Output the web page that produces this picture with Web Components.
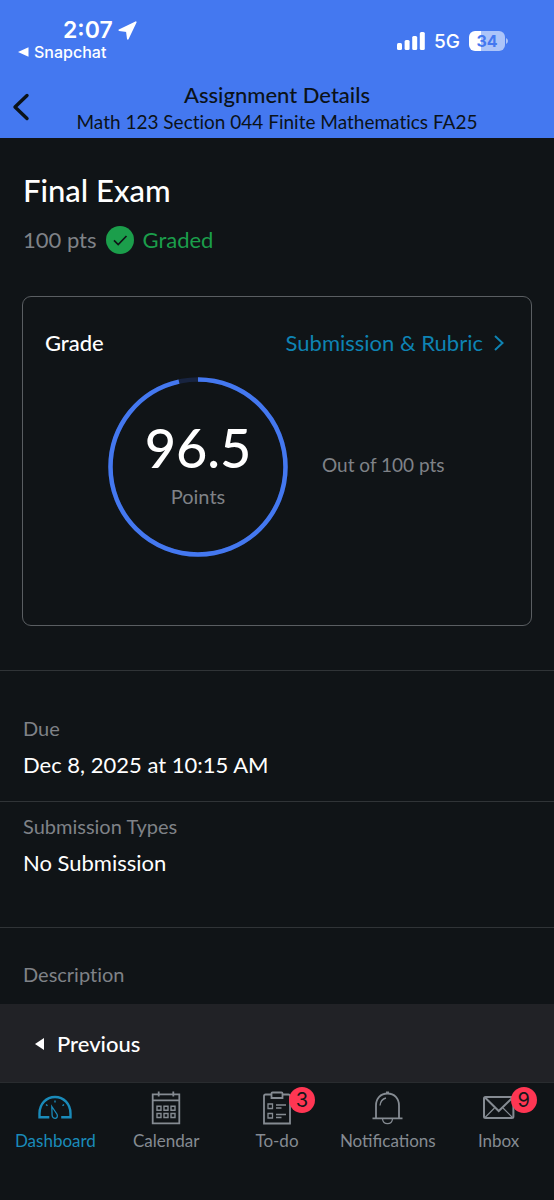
<!DOCTYPE html>
<html lang="en">
<head>
<meta charset="utf-8">
<meta name="viewport" content="width=device-width, initial-scale=1">
<title>Assignment Details</title>
<style>
  :root {
    --bg: #101417; --brand: #4478f0; --ink: #0b1218; --text: #ffffff;
    --muted: #7f8287; --line: #303437; --link: #0e83b3; --green: #1b9e4b; --badge: #ff3653;
  }
  body { margin: 0; background: var(--bg); color: var(--text); font-family: Lato, "Liberation Sans", sans-serif; font-variant-ligatures: no-common-ligatures; }
</style>
</head>
<body>
<assignment-page></assignment-page>
<script>
const define = (name, html, setup) => {
  const template = document.createElement('template');
  template.innerHTML = html;
  customElements.define(name, class extends HTMLElement {
    constructor() {
      super();
      this.attachShadow({ mode: 'open' }).append(template.content.cloneNode(true));
    }
    connectedCallback() { if (setup) setup(this, this.shadowRoot); }
  });
};

define('status-bar', `
  <style>
    :host { display: flex; justify-content: space-between; height: 80px; padding: 0 46px 0 18px; box-sizing: border-box; color: #fff; font-family: Inter, sans-serif; }
    .left { padding-top: 17px; }
    .time { display: flex; align-items: center; gap: 5px; padding-left: 45px; font-size: 23px; font-weight: 600; line-height: 27px; }
    a { display: flex; align-items: center; gap: 5px; color: inherit; text-decoration: none; font-size: 16px; font-weight: 500; line-height: 16px; }
    .right { display: flex; align-items: center; gap: 9px; height: 20px; padding-top: 31px; font-size: 19px; font-weight: 500; }
    svg { display: block; }
    .battery { display: flex; align-items: center; gap: 1px; }
    .cell { width: 36px; height: 20px; border-radius: 6px; background: linear-gradient(90deg, #fff 34%, #acc4f9 34%); color: var(--brand); font-size: 16px; font-weight: 700; line-height: 20px; text-align: center; }
  </style>
  <div class="left">
    <div class="time"><span>2:07</span>
      <svg width="19" height="19" viewBox="0 0 19 19" fill="#fff" stroke="#fff" stroke-width="1.600" stroke-linejoin="round"><path d="M17.800 1.200 9.800 17.800 8.800 10.200 1.200 9.200z"/></svg>
    </div>
    <a href="#snapchat"><svg width="11" height="10" viewBox="0 0 11 10" fill="#fff"><path d="M0 5 10.500.3v9.400z"/></svg><span>Snapchat</span></a>
  </div>
  <div class="right">
    <svg width="28" height="18" viewBox="0 0 28 18" fill="#fff"><rect y="11" width="5" height="7" rx="1.500"/><rect x="7.600" y="8" width="5" height="10" rx="1.500"/><rect x="15.200" y="4" width="5" height="14" rx="1.500"/><rect x="22.800" width="5" height="18" rx="1.500"/></svg>
    <span>5G</span>
    <div class="battery"><div class="cell">34</div><svg width="2" height="6" viewBox="0 0 2 6"><path d="M0 0Q2 1 2 3T0 6z" fill="#acc4f9"/></svg></div>
  </div>`);

define('nav-header', `
  <style>
    :host { display: grid; grid-template-columns: 44px 1fr 44px; height: 58px; color: var(--ink); }
    button { display: flex; align-items: center; padding: 0 0 4px 12px; border: 0; background: none; color: inherit; }
    .titles { text-align: center; white-space: nowrap; }
    h1 { margin: 0; font-size: 22px; font-weight: 500; line-height: 29px; }
    p { margin: 0; font-size: 19px; line-height: 25px; }
  </style>
  <button aria-label="Back"><svg width="18" height="28" viewBox="0 0 18 28" fill="none" stroke="currentColor" stroke-width="3.400" stroke-linecap="round" stroke-linejoin="round"><path d="M15 2.500 3 14l12 11.500"/></svg></button>
  <div class="titles"><h1><slot name="title"></slot></h1><p><slot name="course"></slot></p></div>`);

define('score-ring', `
  <style>
    :host { display: grid; width: 180px; height: 180px; }
    svg, .label { grid-area: 1 / 1; }
    .label { display: flex; flex-direction: column; align-items: center; padding-top: 37px; }
    b { font-size: 54px; font-weight: 500; line-height: 68px; }
    span { color: var(--muted); font-size: 20px; line-height: 28px; }
  </style>
  <svg width="180" height="180" viewBox="0 0 180 180" fill="none" stroke-width="4.500">
    <circle cx="90" cy="90" r="87.500" stroke="#182440"/>
    <circle cx="90" cy="90" r="87.500" stroke="var(--brand)" pathLength="100" stroke-dasharray="96.500 3.500" transform="rotate(-90 90 90)"/>
  </svg>
  <div class="label"><b><slot></slot></b><span>Points</span></div>`);

define('grade-card', `
  <style>
    :host { display: block; min-height: 330px; margin: 0 22px; padding: 32px 26px 0 22px; box-sizing: border-box; border: 1px solid #5a5e62; border-radius: 9px; }
    .head { display: flex; justify-content: space-between; font-size: 22px; line-height: 28px; }
    h3 { margin: 0; font-size: inherit; font-weight: 500; }
    a { display: flex; align-items: center; gap: 10px; color: var(--link); text-decoration: none; }
    .score { display: flex; align-items: center; gap: 34px; margin-top: 20px; padding-left: 63px; }
    .total { padding-bottom: 4px; color: var(--muted); font-size: 19px; line-height: 28px; }
  </style>
  <div class="head"><h3>Grade</h3><a href="#rubric">Submission &amp; Rubric<svg width="12" height="18" viewBox="0 0 12 18" fill="none" stroke="currentColor" stroke-width="2"><path d="m2 2 7.500 7L2 16"/></svg></a></div>
  <div class="score"><score-ring><slot name="score"></slot></score-ring><div class="total"><slot name="total"></slot></div></div>`);

define('detail-item', `
  <style>
    :host { display: block; padding: 0 23px; box-sizing: border-box; border-top: 1px solid var(--line); }
    h3 { margin: 0; color: var(--muted); font-size: 20px; font-weight: 400; line-height: 28px; }
    div { padding-top: 8px; font-size: 22px; line-height: 30px; }
  </style>
  <h3><slot name="label"></slot></h3><div><slot></slot></div>`);

define('pager-bar', `
  <style>
    :host { display: flex; align-items: center; height: 79px; padding: 2px 35px 0; box-sizing: border-box; background: #212226; border-bottom: 1px solid #292c2f; }
    button { display: flex; align-items: center; gap: 12px; padding: 0; border: 0; background: none; color: #fff; font: 500 22px/28px Lato, sans-serif; }
  </style>
  <button><svg width="10" height="12" viewBox="0 0 10 12" fill="currentColor"><path d="M0 6 9 0v12z"/></svg>Previous</button>`);

define('tab-item', `
  <style>
    :host { display: block; flex: 1 1 0; min-width: 0; color: #858b92; font-variant-ligatures: normal; }
    :host([current]) { color: #1a8bba; }
    a { display: flex; flex-direction: column; align-items: center; padding-top: 8px; color: inherit; text-decoration: none; font-size: 17px; line-height: 24px; }
    .icon { position: relative; display: flex; width: 36px; height: 36px; }
    .badge { position: absolute; top: -4px; left: 30px; width: 26px; height: 26px; border-radius: 50%; background: var(--badge); color: #15161a; font: 20px/26px Inter, sans-serif; text-align: center; }
    .badge:empty { display: none; }
    .text { padding-top: 2px; }
  </style>
  <a href="#"><span class="icon"><slot name="icon"></slot><span class="badge"></span></span><span class="text"><slot></slot></span></a>`,
  (host, root) => { root.querySelector('.badge').textContent = host.getAttribute('badge') || ''; });

define('tab-bar', `
  <style>
    :host { display: flex; min-height: 117px; }
    svg { width: 36px; height: 36px; fill: none; stroke: currentColor; stroke-width: 1.800; }
  </style>
  <tab-item current><svg slot="icon" viewBox="0 0 36 36"><path d="M12.300 26.300H2.500v-3.800C2.500 13 9.300 6 18 6s15.500 7 15.500 16.500v3.800h-9.300" stroke-width="2.400"/><path d="M14.800 15.500 20 23.200c2 5-4.500 5.600-4.900 1.100z" stroke-width="1.300"/><path d="M18 9.500v2M9 13.500l1.500 1.300M27 13.500l-1.500 1.300" stroke-width="1.400"/></svg>Dashboard</tab-item>
  <tab-item><svg slot="icon" viewBox="0 0 36 36"><path d="M4.700 3.400h26.600v29H4.700zM4.700 9.300h26.600M10.700.5v5M25.300.5v5"/><path d="M9 15.300h4v4H9zm7 0h4v4h-4zm7 0h4v4h-4zM9 22.500h4v4H9zm7 0h4v4h-4zm7 0h4v4h-4z" stroke-width="1.400"/></svg>Calendar</tab-item>
  <tab-item badge="3"><svg slot="icon" viewBox="0 0 36 36"><path d="M12 3.500H6.500Q5 3.500 5 5v27.500h26V5q0-1.500-1.500-1.500H24M13.500 1.500h9q1 0 1 1V7h-11V2.500q0-1 1-1z"/><path d="M9 13h4.500v4.500H9zm0 9.500h4.500V27H9zM17 14h10M17 17h5.500M17 23.500h10M17 26.500h5.500" stroke-width="1.300"/></svg>To-do</tab-item>
  <tab-item><svg slot="icon" viewBox="0 0 36 36"><path d="M2.500 27.300h30M6 27V14.500C6 7.500 10.500 2.500 17.500 2.500s11.500 5 11.500 12V27M16 1.500h3"/><path d="M10 14.500q.5-6 6-7.500M12.500 28q.5 4.700 5 4.700t5-4.700" stroke-width="1.300"/></svg>Notifications</tab-item>
  <tab-item badge="9"><svg slot="icon" viewBox="0 0 36 36"><rect x="3" y="5.900" width="29.400" height="21" rx="1.500" stroke-width="2"/><path d="m4 6.500 13.700 13.500 14-13.500" stroke-width="2"/><path d="m4 26.500 9.500-9.500M31.500 26.500 22 17" stroke-width="1.200"/></svg>Inbox</tab-item>`);

define('assignment-page', `
  <style>
    :host { display: flex; flex-direction: column; min-height: 100vh; }
    header { background: var(--brand); }
    main { flex: 1; }
    h2 { margin: 0; padding: 33px 23px 0; font-size: 31px; font-weight: 500; line-height: 38px; }
    .meta { display: flex; align-items: center; gap: 9px; padding: 17px 23px 0; margin-bottom: 42px; color: var(--muted); font-size: 22px; line-height: 28px; }
    .graded { display: flex; align-items: center; gap: 9px; color: var(--green); }
    .due { margin-top: 44px; padding-top: 43px; padding-bottom: 21px; }
    .types { padding-top: 10px; padding-bottom: 49px; }
    .description { padding-top: 32px; }
  </style>
  <header>
    <status-bar></status-bar>
    <nav-header><span slot="title">Assignment Details</span><span slot="course">Math 123 Section 044 Finite Mathematics FA25</span></nav-header>
  </header>
  <main>
    <h2>Final Exam</h2>
    <div class="meta"><span>100 pts</span><span class="graded"><svg width="28" height="28" viewBox="0 0 28 28"><circle cx="14" cy="14" r="14" fill="currentColor"/><path d="m8 14.300 4.200 4.200L20.500 10" fill="none" stroke="#101417" stroke-width="1.700"/></svg>Graded</span></div>
    <grade-card><span slot="score">96.5</span><span slot="total">Out of 100 pts</span></grade-card>
    <detail-item class="due"><span slot="label">Due</span>Dec 8, 2025 at 10:15 AM</detail-item>
    <detail-item class="types"><span slot="label">Submission Types</span>No Submission</detail-item>
    <detail-item class="description"><span slot="label">Description</span></detail-item>
  </main>
  <pager-bar></pager-bar>
  <tab-bar></tab-bar>`);
</script>
</body>
</html>
